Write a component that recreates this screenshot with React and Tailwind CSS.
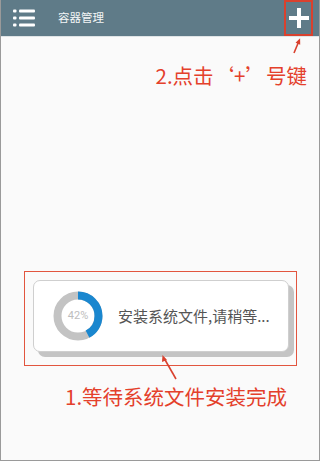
import React from "react";

const cjk = { fontFamily: '"Noto Sans CJK SC", "Noto Sans", sans-serif' };

function MenuIcon() {
  return (
    <svg width="22" height="18" viewBox="0 0 22 18">
      {[2, 9, 16].map((y) => (
        <g key={y}>
          <rect x="0" y={y - 1.6} width="3.5" height="3.2" rx="1" fill="#fff" />
          <rect x="6" y={y - 1.6} width="16" height="3.2" rx="1" fill="#fff" />
        </g>
      ))}
    </svg>
  );
}

function Donut({ percent }) {
  const r = 20.5;
  const c = 2 * Math.PI * r;
  return (
    <div className="relative w-[50px] h-[50px] shrink-0">
      <svg width="50" height="50" viewBox="0 0 50 50">
        <circle cx="25" cy="25" r={r} fill="none" stroke="#c3c3c3" strokeWidth="8" />
        <circle
          cx="25"
          cy="25"
          r={r}
          fill="none"
          stroke="#1a87cf"
          strokeWidth="8"
          strokeDasharray={`${(c * percent) / 100} ${c}`}
          transform="rotate(-90 25 25)"
        />
      </svg>
      <div
        className="absolute inset-0 flex items-center justify-center text-[11px] text-[#bdbdbd]"
        style={{ fontFamily: '"Roboto", sans-serif' }}
      >
        {percent}%
      </div>
    </div>
  );
}

export default function App() {
  return (
    <div
      className="relative w-[320px] h-[461px] bg-[#fafafa] border-x border-b border-[#9a9a9a] flex flex-col overflow-hidden"
      style={cjk}
    >
      {/* header */}
      <div className="h-[37px] bg-[#5f7b88] flex items-center border-b border-[#dfe4e6] shrink-0">
        <div className="ml-[12px]">
          <MenuIcon />
        </div>
        <div className="ml-[23px] text-[11.5px] text-[#f2f5f6]">容器管理</div>
        <div className="ml-auto mr-[6px] w-[29px] h-[36px] border-2 border-[#d9412e] flex items-center justify-center self-start">
          <svg width="20" height="20" viewBox="0 0 20 20">
            <rect x="8" y="0" width="4" height="20" fill="#fff" />
            <rect x="0" y="8" width="20" height="4" fill="#fff" />
          </svg>
        </div>
      </div>

      {/* step 2 note */}
      <div className="mt-[25px] pr-[12px] text-right text-[20.5px] leading-[26px] text-[#e4402b]">
        2.点击‘+’号键
      </div>

      {/* loading card with outline */}
      <div className="mt-[183px] ml-[23px] w-[273px] h-[95px] border border-[#e2553f] pt-[8px] pl-[8px]">
        <div className="relative w-[257px] h-[72px]">
          <div className="absolute left-[5px] top-[5px] w-[256px] h-[72px] rounded-[7px] bg-[#c4c4c4]" />
          <div className="relative w-[256px] h-[72px] rounded-[7px] bg-white border border-[#cfcfcf] flex items-center pl-[19px]">
            <Donut percent={42} />
            <div className="ml-[15px] text-[15px] text-[#555555] whitespace-nowrap">
              安装系统文件,请稍等...
            </div>
          </div>
        </div>
      </div>

      {/* step 1 note */}
      <div className="mt-[17px] pl-[64px] text-[20.5px] leading-[26px] text-[#e4402b]">
        1.等待系统文件安装完成
      </div>

      {/* annotation arrows */}
      <svg className="absolute left-0 top-0 pointer-events-none" width="320" height="461">
        <line x1="293" y1="53" x2="298" y2="41" stroke="#d9412e" strokeWidth="1.6" />
        <path d="M298 38 L295.5 44 L300.5 44 Z" fill="#d9412e" transform="rotate(22 298 41)" />
        <line x1="175" y1="379" x2="163" y2="358" stroke="#d9412e" strokeWidth="1.6" />
        <path d="M161.5 355 L161 362 L166 360 Z" fill="#d9412e" />
      </svg>
    </div>
  );
}
